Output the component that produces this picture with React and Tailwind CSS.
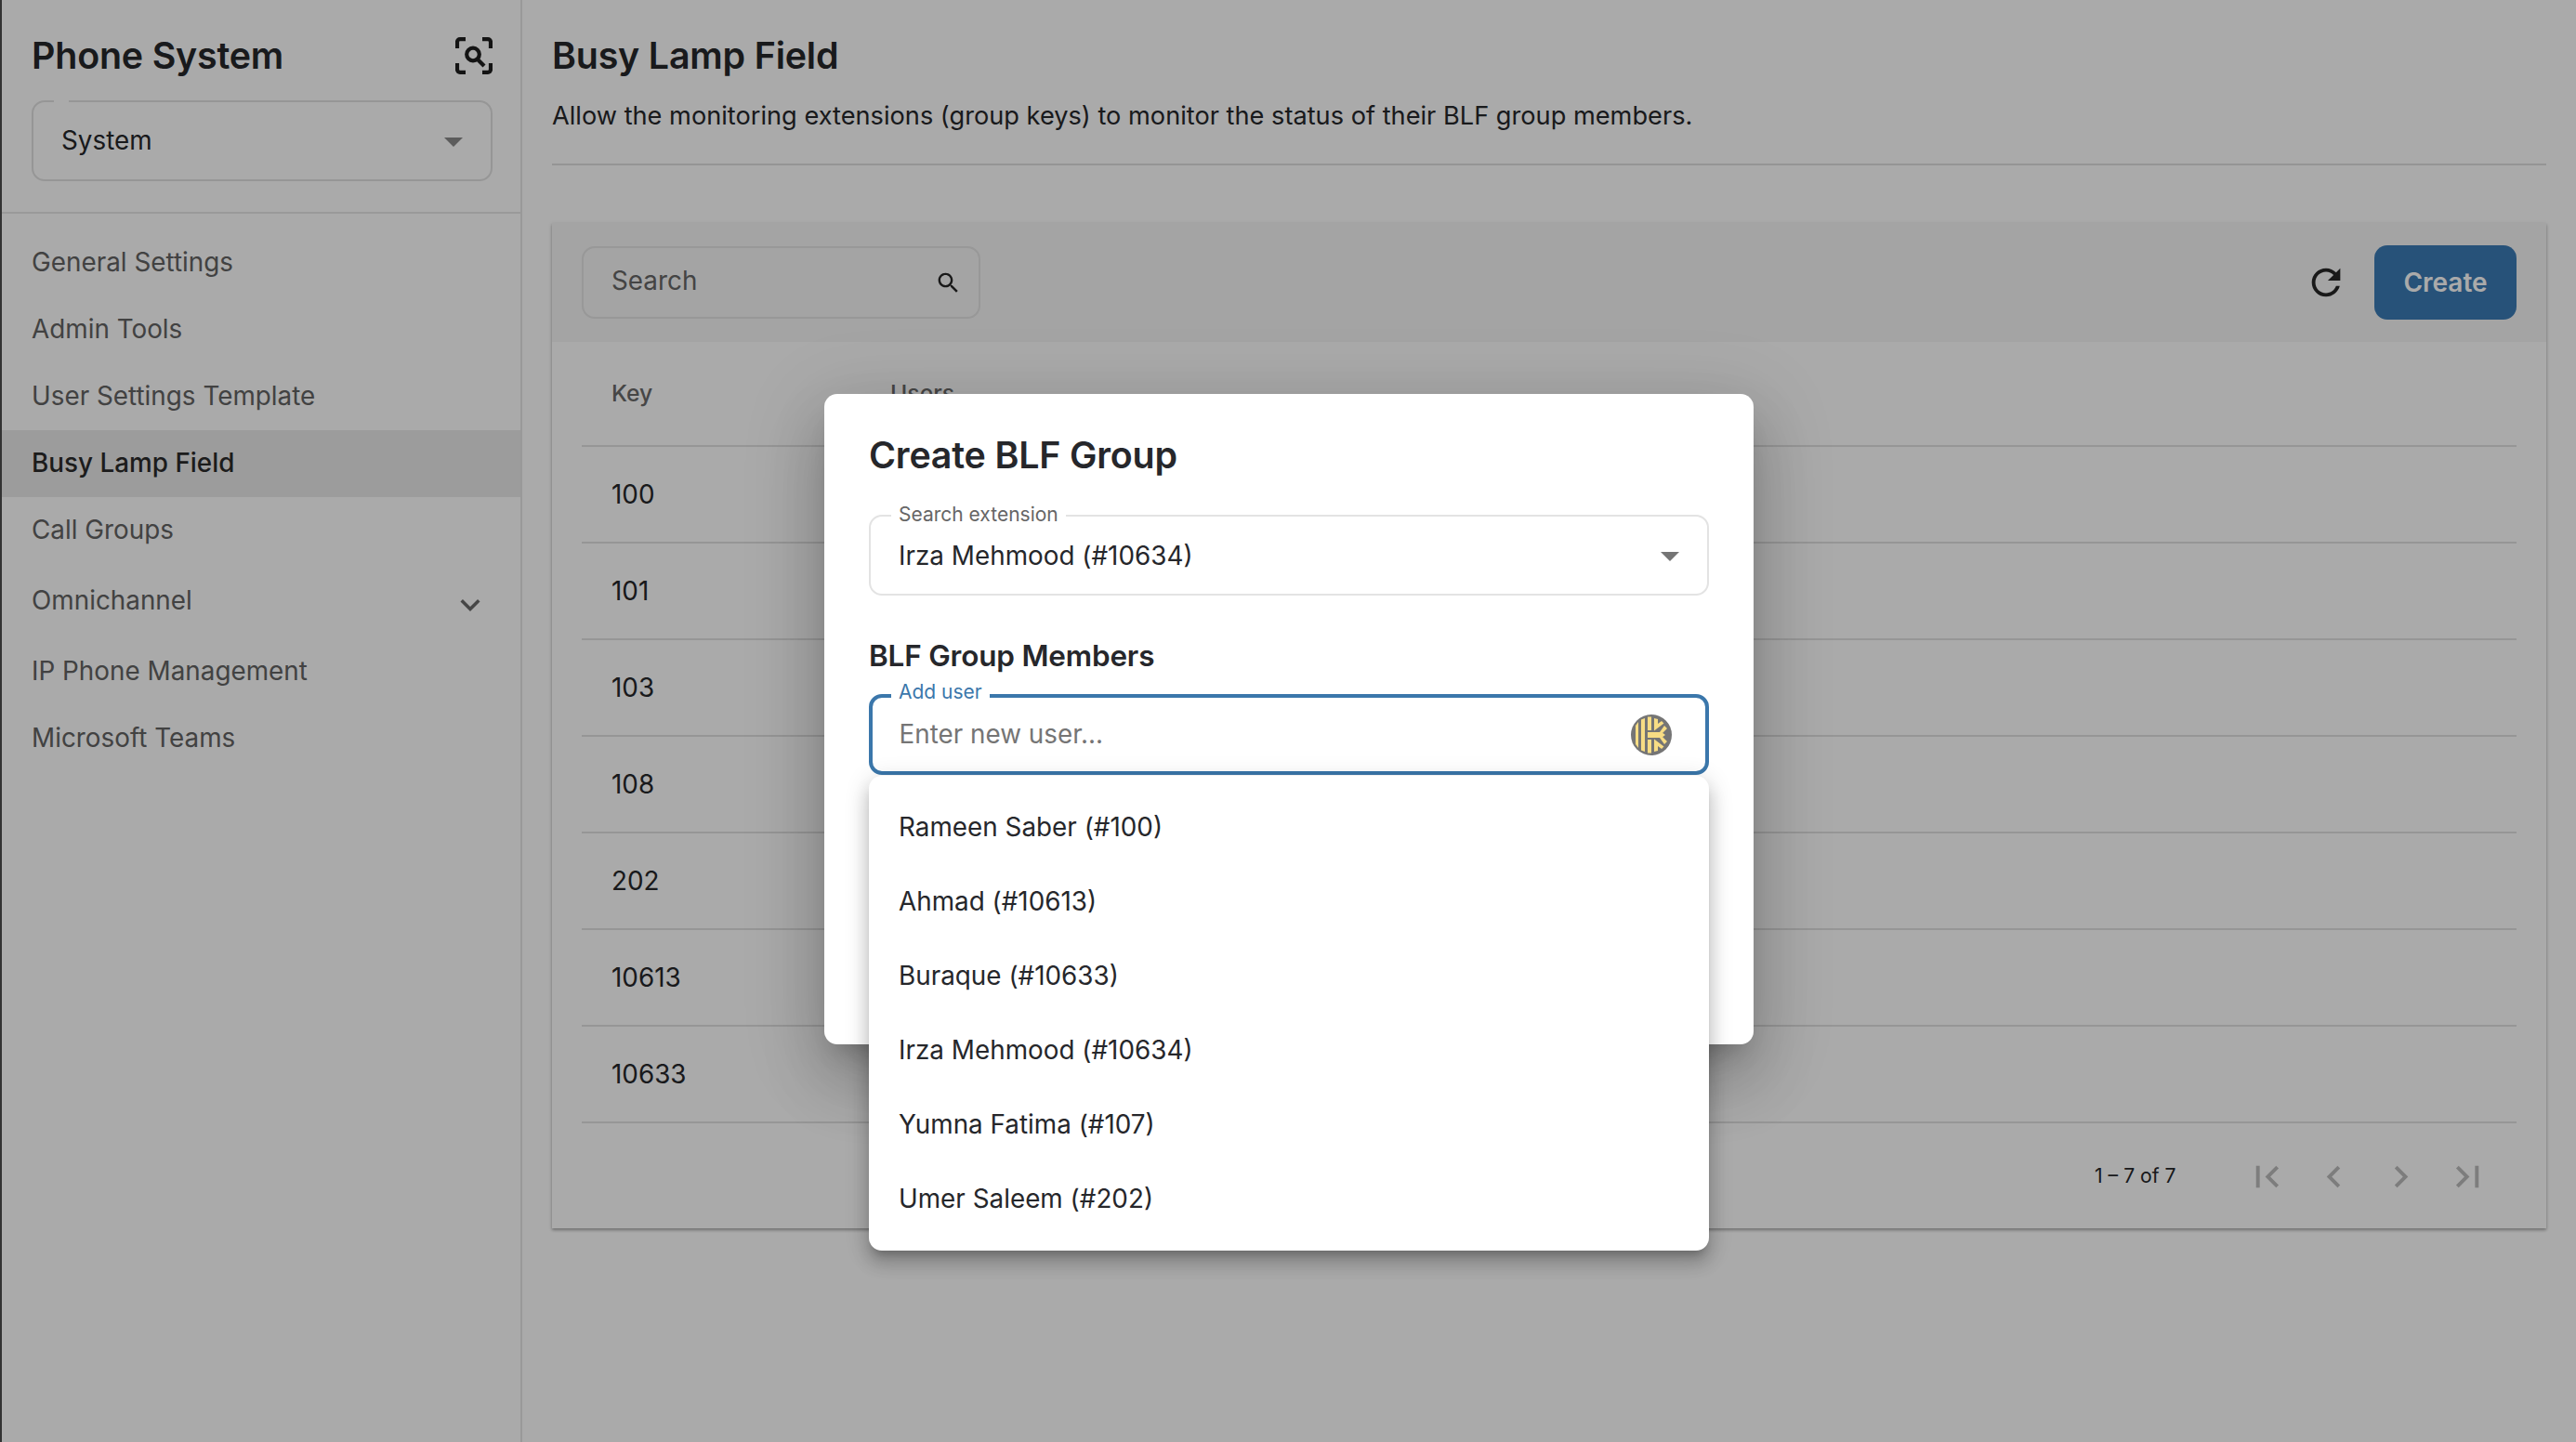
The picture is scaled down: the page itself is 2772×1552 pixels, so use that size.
const P = ({ d, size, className = "" }) => (
  <svg viewBox="0 0 24 24" width={size} height={size} fill="currentColor" className={"shrink-0 " + className}>
    <path d={d} />
  </svg>
);
const I = {
  search: "M15.5 14h-.79l-.28-.27C15.41 12.59 16 11.11 16 9.5 16 5.91 13.09 3 9.5 3S3 5.91 3 9.5 5.91 16 9.5 16c1.61 0 3.09-.59 4.23-1.57l.27.28v.79l5 4.99L20.49 19l-4.99-5zm-6 0C7.01 14 5 11.99 5 9.5S7.01 5 9.5 5 14 7.01 14 9.5 11.99 14 9.5 14z",
  refresh: "M17.65 6.35C16.2 4.9 14.21 4 12 4c-4.42 0-7.99 3.58-7.99 8s3.57 8 7.99 8c3.73 0 6.84-2.55 7.73-6h-2.08c-.82 2.33-3.04 4-5.65 4-3.31 0-6-2.69-6-6s2.69-6 6-6c1.66 0 3.14.69 4.22 1.78L13 11h7V4l-2.35 2.35z",
  expand: "M16.59 8.59 12 13.17 7.41 8.59 6 10l6 6 6-6z",
  first: "M18.41 16.59 13.82 12l4.59-4.59L17 6l-6 6 6 6zM6 6h2v12H6z",
  prev: "M15.41 7.41 14 6l-6 6 6 6 1.41-1.41L10.83 12z",
  next: "M10 6 8.59 7.41 13.17 12l-4.58 4.59L10 18l6-6z",
  last: "M5.59 7.41 10.18 12l-4.59 4.59L7 18l6-6-6-6zM16 6h2v12h-2z",
  drop: "M7 10l5 5 5-5z",
};

const ScanIcon = () => (
  <svg viewBox="0 0 40 40" width="40" height="40" fill="none" stroke="#1f1f1f" strokeWidth="4.200" className="shrink-0">
    <path d="M11 2.200H5a3 3 0 0 0-3 3V12M29 2.200h6a3 3 0 0 1 3 3V12M11 37.800H5a3 3 0 0 1-3-3V28M29 37.800h6a3 3 0 0 0 3-3V28" />
    <circle cx="19" cy="18.500" r="6.800" />
    <path d="M24 24 31 31" />
  </svg>
);

const KeeperIcon = () => (
  <svg viewBox="0 0 44 44" width="44" height="44" className="shrink-0">
    <circle cx="22" cy="22" r="22" fill="#757575" />
    <g fill="#f8dd84">
      <path d="M5 12 8 8v28l-3-4z" />
      <path d="M11 5.500 15 4v36l-4-1.500z" />
      <path d="M18 2.500h4V17h-4zM18 27h4v14.500h-4z" />
      <path d="M18 19h15l4 3-4 3H18z" />
      <path d="M25 4l4 1v5l4-3 2.500 2.500L25 17.500zM25 40l4-1v-5l4 3 2.500-2.500L25 26.500z" />
      <path d="M36 12l3 3-5 5-3-1zM36 32l3-3-5-5-3 1z" />
    </g>
  </svg>
);

const nav = [
  ["General Settings", "h-[72px]"],
  ["Admin Tools", "h-[72px]"],
  ["User Settings Template", "h-[72px]"],
  ["Busy Lamp Field", "h-[72px]", true],
  ["Call Groups", "h-[72px]"],
];
const keys = ["100", "101", "103", "108", "202", "10613", "10633"];
const opts = [
  "Rameen Saber (#100)",
  "Ahmad (#10613)",
  "Buraque (#10633)",
  "Irza Mehmood (#10634)",
  "Yumna Fatima (#107)",
  "Umer Saleem (#202)",
];

export default function App() {
  return (
    <div className="relative flex w-screen h-screen overflow-hidden bg-white font-['Inter',sans-serif] text-[#26272b]">
      {/* sidebar */}
      <aside className="flex flex-col w-[562px] shrink-0 border-l-[2px] border-l-[#4c4c4c] border-r-[2px] border-r-[#e6e6e6]">
        <div className="h-[230px] shrink-0 border-b-[2px] border-[#e6e6e6] px-[32px] pt-[32px]">
          <div className="flex items-center justify-between h-[56px] w-[496px]">
            <span className="text-[39.400px] leading-[56px] font-semibold tracking-[-0.2px]">Phone System</span>
            <ScanIcon />
          </div>
          <div className="relative mt-[20px] flex items-center justify-between h-[87px] w-[496px] rounded-[14px] border-[2px] border-[#e2e2e2] pl-[30px] pr-[16px]">
            <span className="absolute -top-[2px] left-[22px] w-[16px] h-[2px] bg-white" />
            <span className="text-[27.850px]">System</span>
            <P d={I.drop} size={48} className="text-[#8a8a8a]" />
          </div>
        </div>
        <nav className="flex flex-col pt-[16.500px] text-[27.850px] text-[#636363]">
          {nav.map(([t, h, active]) => (
            <div key={t} className={`flex items-center px-[32px] ${h} ${active ? "bg-[#ebebeb] font-medium text-[#2a2a2a]" : ""}`}>
              {t}
            </div>
          ))}
          <div className="flex items-center justify-between h-[80px] pl-[32px] pr-[33px]">
            <span>Omnichannel</span>
            <P d={I.expand} size={42} className="text-[#6a6a6a] mt-[9px]" />
          </div>
          <div className="flex items-center h-[72px] px-[32px]">IP Phone Management</div>
          <div className="flex items-center h-[72px] px-[32px]">Microsoft Teams</div>
        </nav>
      </aside>

      {/* main */}
      <main className="flex-1 flex flex-col pl-[32px] pr-[32px] pt-[32px]">
        <h1 className="text-[39.400px] leading-[56px] font-semibold tracking-[-0.2px]">Busy Lamp Field</h1>
        <p className="mt-[21px] text-[27.200px] leading-[32px]">
          Allow the monitoring extensions (group keys) to monitor the status of their BLF group members.
        </p>
        <div className="mt-[35px] h-[2px] bg-[#e0e0e0]" />
        <section className="mt-[62px] h-[1082px] bg-white shadow-[0_2px_3px_rgba(0,0,0,0.3),0_1px_5px_rgba(0,0,0,0.08)]">
          <div className="flex items-center justify-between h-[128px] bg-[#f6f6f6] pl-[32px] pr-[32px]">
            <div className="flex items-center justify-between w-[429px] h-[78px] rounded-[14px] border-[2px] border-[#e4e4e4] pl-[30px] pr-[18px]">
              <span className="text-[27.850px] text-[#666666] -mt-[2px]">Search</span>
              <P d={I.search} size={29} className="text-[#262626]" />
            </div>
            <div className="flex items-center gap-[29px]">
              <P d={I.refresh} size={46} className="text-[#262626]" />
              <button className="w-[153px] h-[80px] rounded-[14px] bg-[#3b7cb6] text-white text-[28px] font-semibold">Create</button>
            </div>
          </div>
          <div className="mx-[32px]">
            <div className="flex items-center h-[112.500px] pt-[1.500px] border-b-[2px] border-[#e2e2e2] text-[24.750px] font-medium text-[#6a6a6a]">
              <span className="w-[332px] pl-[32px]">Key</span>
              <span>Users</span>
            </div>
            {keys.map((k) => (
              <div key={k} className="flex items-center h-[104px] pt-[2px] border-b-[2px] border-[#e2e2e2] pl-[32px] text-[27.850px]">
                {k}
              </div>
            ))}
          </div>
          <div className="flex items-center h-[115px] pl-[1660px]">
            <span className="w-[162px] text-[21.200px]">1 – 7 of 7</span>
            <div className="flex items-center gap-[25px] text-[#bcbcbc]">
              <P d={I.first} size={47} />
              <P d={I.prev} size={47} />
              <P d={I.next} size={47} />
              <P d={I.last} size={47} />
            </div>
          </div>
        </section>
      </main>

      {/* backdrop */}
      <div className="absolute inset-0 bg-black/[0.335]" />

      {/* dialog */}
      <div className="absolute left-[887px] top-[424px] w-[1000px] h-[700px] rounded-[14px] bg-white px-[48px] pt-[40px] shadow-[0_19px_27px_-12px_rgba(0,0,0,0.2),0_42px_67px_5px_rgba(0,0,0,0.14),0_16px_81px_14px_rgba(0,0,0,0.12)]">
        <h2 className="text-[39.400px] leading-[52px] font-semibold tracking-[-0.2px]">Create BLF Group</h2>
        <div className="relative mt-[38px] flex items-center justify-between h-[87px] w-[904px] rounded-[14px] border-[2px] border-[#e3e3e3] pl-[30px] pr-[16px]">
          <span className="absolute -top-[15px] left-[22px] bg-white px-[8px] text-[21px] leading-[26px] text-[#666666]">Search extension</span>
          <span className="text-[27.850px] pt-[2px]">Irza Mehmood (#10634)</span>
          <P d={I.drop} size={48} className="text-[#757575]" />
        </div>
        <h3 className="mt-[44.500px] text-[31.500px] leading-[40px] font-semibold tracking-[-0.2px]">BLF Group Members</h3>
        <div className="relative mt-[21.500px] flex items-center justify-between h-[87px] w-[904px] rounded-[14px] border-[4px] border-[#3b77ab] pl-[28.500px] pr-[36px]">
          <span className="absolute -top-[19px] left-[20px] bg-white px-[8px] text-[21px] leading-[26px] text-[#3b77ab]">Add user</span>
          <span className="text-[27.850px] text-[#757575]">Enter new user...</span>
          <KeeperIcon />
        </div>
      </div>

      {/* autocomplete list */}
      <ul className="absolute left-[935px] top-[835px] w-[904px] h-[511px] rounded-[14px] bg-white pt-[15.500px] text-[27.850px] shadow-[0_9px_9px_-5px_rgba(0,0,0,0.2),0_14px_18px_2px_rgba(0,0,0,0.14),0_5px_25px_4px_rgba(0,0,0,0.12)]">
        {opts.map((o) => (
          <li key={o} className="flex items-center h-[80px] pl-[32px]">{o}</li>
        ))}
      </ul>
    </div>
  );
}
